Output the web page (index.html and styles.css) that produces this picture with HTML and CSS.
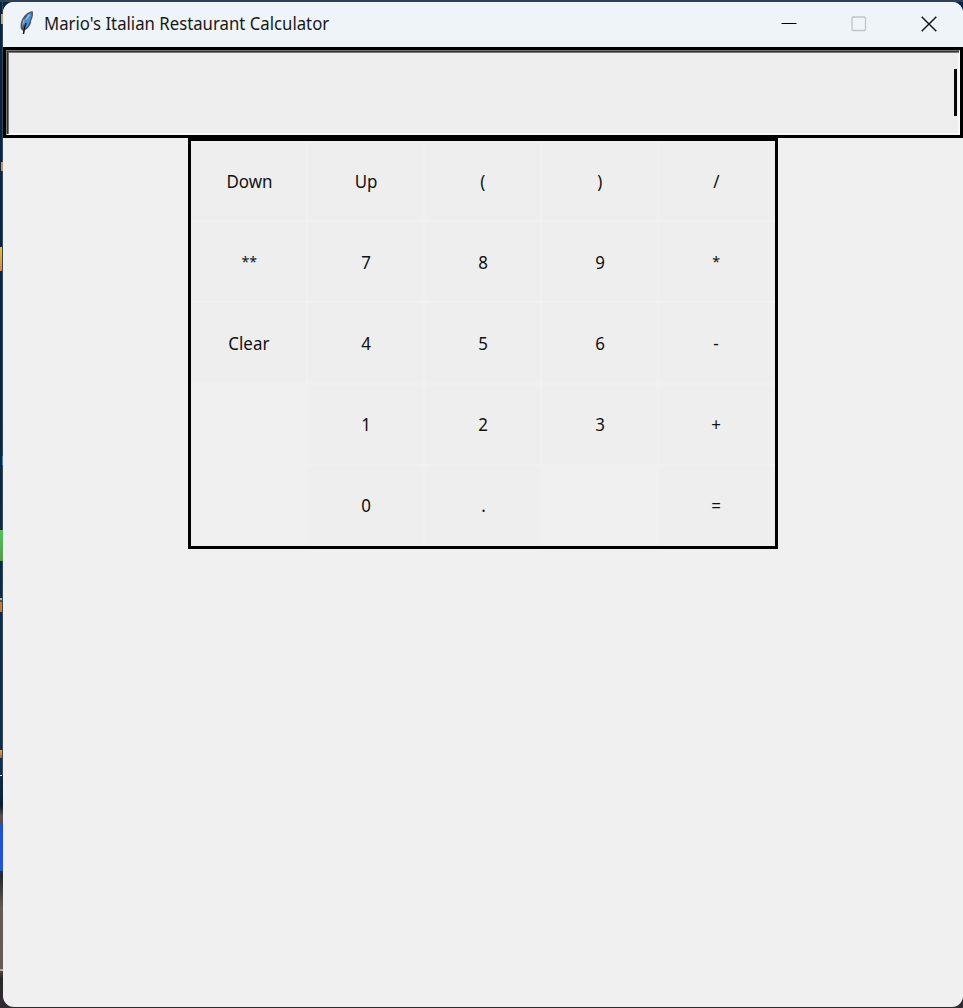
FILE: index.html
```html
<!DOCTYPE html>
<html lang="en">
<head>
<meta charset="utf-8">
<title>Mario's Italian Restaurant Calculator</title>
<link rel="stylesheet" href="styles.css">
</head>
<body>
<main class="window">
  <header class="titlebar">
    <svg class="feather" width="16" height="26" viewBox="0 0 16 26">
      <path d="M13.500 1C8.500 2 5 5.500 3 9.500C1.400 13 1 17 2.300 19.500L4 20.800V24.500L5.500 20.500C9 18.500 11.200 16 12.300 12C11.800 12 11.700 11.300 12.500 10.300C13.700 7.500 14.700 3.500 13.500 1Z" fill="#50565f"/>
      <path d="M12.200 2.500C9 4 6 8 5 12L4.500 18.800C8 17.800 10 14.500 10.700 11.500C12.200 8.500 13 5 12.200 2.500Z" fill="#4a8fdc"/>
      <path d="M5.500 8C3.800 10.500 3 14 3.500 17L5.500 11Z" fill="#a3b5c7"/>
      <path d="M7 13C6 15.500 5 19 4.500 24" fill="none" stroke="#15191f" stroke-width="1.500"/>
      <path d="M10.500 4.500L7 9.500" fill="none" stroke="#8abdf2" stroke-width="1.500"/>
    </svg>
    <h1 class="title">Mario's Italian Restaurant Calculator</h1>
    <div class="controls">
      <svg class="control" viewBox="0 0 16 16"><path d="M.5 7.500H15.500" stroke="#000"/></svg>
      <svg class="control control-off" viewBox="0 0 16 16"><rect x="1" y="1" width="13.500" height="13.500" rx="1.200"/></svg>
      <svg class="control" viewBox="0 0 16 16"><path d="M.7.700L15.300 15.300M15.300.700L.7 15.300" stroke="#111" stroke-width="1.400"/></svg>
    </div>
  </header>
  <section class="display"><div class="field"><span class="caret"></span></div></section>
  <section class="keypad">
    <div class="key"><span>Down</span></div><div class="key"><span>Up</span></div><div class="key"><span>(</span></div><div class="key"><span>)</span></div><div class="key last"><span>/</span></div>
    <div class="key star"><span>**</span></div><div class="key"><span>7</span></div><div class="key"><span>8</span></div><div class="key"><span>9</span></div><div class="key star last"><span>*</span></div>
    <div class="key"><span>Clear</span></div><div class="key"><span>4</span></div><div class="key"><span>5</span></div><div class="key"><span>6</span></div><div class="key last"><span>-</span></div>
    <div class="blank"></div><div class="key"><span>1</span></div><div class="key"><span>2</span></div><div class="key"><span>3</span></div><div class="key last"><span>+</span></div>
    <div class="blank"></div><div class="key"><span>0</span></div><div class="key"><span>.</span></div><div class="blank"></div><div class="key last"><span>=</span></div>
  </section>
</main>
</body>
</html>
```
FILE: styles.css
```css
* { box-sizing: border-box; }
body {
  margin: 0;
  width: 963px;
  height: 1008px;
  padding: 2px 0 1px 3px;
  overflow: hidden;
  font-family: "Noto Sans", "Open Sans", sans-serif;
  /* slivers of the desktop visible beside the window */
  background:
    linear-gradient(#2f4055, #2f4055) 0 0 / 100% 2px no-repeat,
    linear-gradient(#c4a36c, #c4a36c) 1px 14px / 2px 10px no-repeat,
    linear-gradient(#b99b68, #b99b68) 1px 162px / 2px 9px no-repeat,
    linear-gradient(#e4c532, #e68135) 0 247px / 2px 24px no-repeat,
    linear-gradient(#4382bc, #4382bc) 2px 456px / 1px 9px no-repeat,
    linear-gradient(#50c456, #57994d) 0 530px / 3px 31px no-repeat,
    linear-gradient(#d1b18c 0 2px, #315375 2px 4px, #c97929 4px) 0 598px / 2px 14px no-repeat,
    linear-gradient(#e0a45c, #b56028) 0 750px / 2px 8px no-repeat,
    linear-gradient(#dfe6ea, #dfe6ea) 0 775px / 2px 1px no-repeat,
    linear-gradient(#1c4fd5, #2157d8) 0 823px / 3px 48px no-repeat,
    linear-gradient(#b5aaa5, #b5aaa5) 0 969px / 3px 2px no-repeat,
    linear-gradient(#344758, #344758) 2px 0 / 1px 775px no-repeat,
    linear-gradient(#072447 0, #082641 40%, #0b304d 76%, #0b2030 80%, #5a5350 81%, #252a2e 87%, #635955 90%, #645a56 96%, #292929 97%, #302c32 100%);
}
.window {
  height: 1005px;
  border-radius: 11px;
  overflow: hidden;
  background: #f0f0f0;
}
.titlebar {
  height: 45px;
  display: flex;
  align-items: center;
  padding: 0 26px 3px 16px;
  background: #eff4f9;
}
.feather { margin-right: 9px; }
.title {
  margin: 0;
  width: 300px;
  font-size: 17.500px;
  font-weight: 400;
  line-height: 24px;
  white-space: nowrap;
  color: #181818;
  transform: scaleX(.957);
  transform-origin: left;
}
.controls { display: flex; gap: 54px; margin-left: auto; padding-top: 2px; }
.control { width: 16px; height: 16px; }
.control-off { fill: none; stroke: #c1c5ca; stroke-width: 1.3; }
.display {
  height: 91px;
  border: 3px solid #000;
}
.field {
  height: 85px;
  border: 1px solid;
  border-color: #777 #fafafa #fafafa #777;
  background: #eee;
  box-shadow: inset 1px 1px #333, inset 2px 2px #777, inset -1px -1px #f8f8f8;
  padding-right: 2px;
  display: flex;
  justify-content: flex-end;
  align-items: center;
}
.caret { width: 3px; height: 47px; background: #080808; }
.keypad {
  width: 590px;
  height: 411px;
  margin-left: 185px;
  border: 3px solid #000;
  display: grid;
  grid-template-columns: 115px 115px 115px 115px 116px;
  grid-template-rows: repeat(5, 79.200px);
  gap: 2px;
}
.key {
  display: flex;
  align-items: center;
  justify-content: center;
  padding-left: 1px;
  background: #eee;
  font-size: 18px;
  line-height: 24px;
  color: #111;
}
.key span { transform: scaleX(.94); }
.star { font-size: 15px; padding-bottom: 2px; }
.last { padding-left: 0; padding-right: 2px; }
```
